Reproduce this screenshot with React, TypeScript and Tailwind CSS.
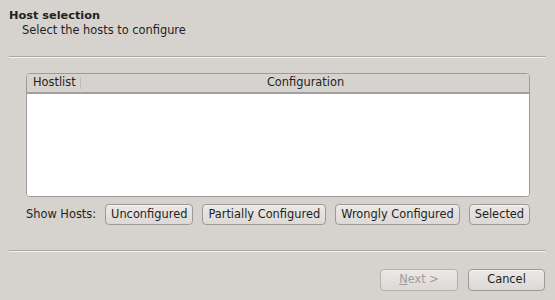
import React from "react";

const FILTERS = ["Unconfigured", "Partially Configured", "Wrongly Configured", "Selected"];

const Button: React.FC<{ label: React.ReactNode; disabled?: boolean; className?: string }> = ({ label, disabled, className }) => (
  <button
    disabled={disabled}
    className={`h-[21px] rounded-[4px] border px-[5px] leading-none bg-gradient-to-b from-[#ebe8e6] to-[#dcd8d5] ${
      disabled ? "border-[#b5b1ae] text-[#a19d9a]" : "border-[#9d9996] text-[#231f1e] shadow-[inset_0_1px_0_#f6f4f3]"
    } ${className ?? ""}`}
  >
    {label}
  </button>
);

export default function App() {
  return (
    <div className="w-[555px] h-[300px] overflow-hidden bg-[#d6d2ce] text-[#231f1e] font-['DejaVu_Sans',sans-serif] text-[11.4px]">
      <div className="pl-[9px] pt-[8px]">
        <div className="text-[11.3px] font-bold leading-[15px]">Host selection</div>
        <div className="pl-[13px] leading-[14px]">Select the hosts to configure</div>
      </div>

      <div className="mt-[19px] mx-[9px] border-t border-[#aaa6a2] border-b border-b-[#f4f2f1]" />

      <div className="mt-[15px] ml-[26px] w-[504px] h-[124px] rounded-[4px] border border-[#9e9a97] bg-white overflow-hidden flex flex-col">
        <div className="h-[20px] flex items-center bg-[#d6d2ce] border-b-2 border-[#a39f9c]">
          <div className="w-[55px] pl-[6px] flex items-center justify-between pr-[1px]">
            <span>Hostlist</span>
            <span className="w-px h-[12px] bg-[#c0bcb9]" />
          </div>
          <div className="flex-1 text-center">Configuration</div>
        </div>
        <div className="flex-1 bg-white" />
      </div>

      <div className="mt-[7px] ml-[26px] flex items-center">
        <span className="mr-[9px]">Show Hosts:</span>
        <div className="flex gap-[9px]">
          {FILTERS.map((f) => (
            <Button key={f} label={f} />
          ))}
        </div>
      </div>

      <div className="mt-[25px] mx-[9px] border-t border-[#aaa6a2] border-b border-b-[#f4f2f1]" />

      <div className="mt-[17px] flex justify-end gap-[10px] pr-[10px]">
        <Button
          disabled
          className="w-[78px] h-[22px]"
          label={
            <>
              <span className="underline">N</span>ext &gt;
            </>
          }
        />
        <Button className="w-[77px] h-[22px]" label="Cancel" />
      </div>
    </div>
  );
}
